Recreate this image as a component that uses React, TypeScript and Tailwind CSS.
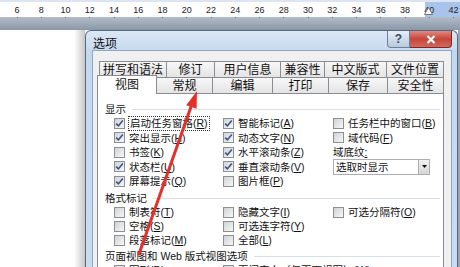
import React from 'react';

const rulerNums = [6, 8, 10, 12, 14, 16, 18, 20, 22, 24, 26, 28, 30, 32, 34, 36, 38, 40, 42];

const tabsTop = [
  { label: '拼写和语法', w: 'w-[68px]' },
  { label: '修订', w: 'w-[48px]' },
  { label: '用户信息', w: 'w-[66px]' },
  { label: '兼容性', w: 'w-[44px]' },
  { label: '中文版式', w: 'w-[62px]' },
  { label: '文件位置', w: 'w-[57px]' },
];

const tabsBottom = [
  { label: '常规', w: 'w-[56px]' },
  { label: '编辑', w: 'w-[60px]' },
  { label: '打印', w: 'w-[56px]' },
  { label: '保存', w: 'w-[59px]' },
  { label: '安全性', w: 'w-[56px]' },
];

function Box({ on }: { on?: boolean }) {
  return (
    <span className="flex h-[11px] w-[11px] shrink-0 items-center justify-center border border-[#8e8f8f] bg-[linear-gradient(135deg,#cfd3d8,#f7f7f7)]">
      {on && (
        <svg width="9" height="9" viewBox="0 0 9 9">
          <path d="M1.2 4.6 L3.4 6.9 L7.8 1.6" fill="none" stroke="#3d5180" strokeWidth="1.6" />
        </svg>
      )}
    </span>
  );
}

function Item({ on, label, k, focus }: { on?: boolean; label: string; k: string; focus?: boolean }) {
  return (
    <div className="flex h-full items-center gap-[4px]">
      <Box on={on} />
      <span className={focus ? 'px-[1px] py-[1px] outline outline-1 outline-dotted outline-[#333]' : ''}>
        {label}(<u>{k}</u>)
      </span>
    </div>
  );
}

function Heading({ text }: { text: string }) {
  return (
    <div className="flex h-[14px] items-center gap-[6px] pl-[7px] pr-[3px]">
      <span className="whitespace-nowrap">{text}</span>
      <div className="h-px flex-1 bg-[#d5dfe5]" />
    </div>
  );
}

export default function App() {
  return (
    <div className="relative h-[267px] w-[460px] overflow-hidden bg-white font-['Liberation_Sans','Noto_Sans_CJK_SC',sans-serif] text-[10.5px] leading-none text-[#111]">
      {/* ruler */}
      <div className="relative h-[17px] border-t-[2px] border-[#dbe5f3] bg-[linear-gradient(to_right,#ffffff_425px,#a9c4ea_425px)]">
        <div className="flex pl-[5px] pt-[3px]">
          {rulerNums.map((n) => (
            <div key={n} className="flex w-[24.26px] shrink-0 flex-col items-center">
              <span className="text-[9px] leading-[10px] text-[#222]">{n}</span>
              <span className="mt-[2px] h-[1px] w-[1px] bg-[#777]" />
            </div>
          ))}
        </div>
        <svg className="absolute left-[424px] top-[5px]" width="9" height="8" viewBox="0 0 9 8">
          <path d="M4.5 0.5 L8.5 7.5 L0.5 7.5 Z" fill="#fff" stroke="#777" strokeWidth="1" />
        </svg>
      </div>
      <div className="h-[13px] bg-[linear-gradient(to_bottom,#b3bcc8,#8b97a8)]" />

      <div className="flex h-[237px]">
        <div className="w-[85px] shrink-0 bg-[linear-gradient(to_right,#ffffff_74px,#c7c7c7_85px)]" />

        {/* dialog */}
        <div className="flex w-[373px] shrink-0 flex-col rounded-t-[6px] border border-b-0 border-[#56667c] bg-[linear-gradient(to_bottom,#dbe7f5,#c4d8ee_22px,#cadcf0)] pl-[6px] pr-[5px]">
          <div className="flex h-[22px] items-start justify-between">
            <span className="mt-[7px] pl-[1px] text-[12px]">选项</span>
            <div className="flex">
              <div className="flex h-[17px] w-[23px] items-center justify-center rounded-bl-[4px] border border-t-0 border-[#6d7f99] bg-[linear-gradient(to_bottom,#e7eef7,#b9c9dd)] text-[12px] font-bold text-[#3b4a60]">
                ?
              </div>
              <div className="flex h-[17px] w-[42px] items-center justify-center rounded-br-[4px] border border-l-0 border-t-0 border-[#7a2a24] bg-[linear-gradient(to_bottom,#e08a80,#c7453a_50%,#d2685c)]">
                <svg width="10" height="9" viewBox="0 0 10 9">
                  <path d="M1.5 1 L8.5 8 M8.5 1 L1.5 8" stroke="#fff" strokeWidth="2.2" />
                </svg>
              </div>
            </div>
          </div>

          {/* client */}
          <div className="flex-1 border border-b-0 border-[#8ea6c2] bg-[#f0f0f0] pl-[4px] pt-[10px]">
            <div className="w-[347px] text-[12px]">
              <div className="flex h-[16px] pl-[2px]">
                {tabsTop.map((t, i) => (
                  <div
                    key={t.label}
                    className={`${t.w} flex items-center justify-center border-t border-r border-[#898c95] bg-[linear-gradient(to_bottom,#f7f7f7,#e4e4e4)] ${i === 0 ? 'border-l' : ''}`}
                  >
                    {t.label}
                  </div>
                ))}
              </div>
              <div className="-mt-[2px] flex h-[18px] items-end">
                <div className="relative z-10 -mb-px flex h-[19px] w-[60px] items-center justify-center border border-b-0 border-[#898c95] bg-white">
                  视图
                </div>
                {tabsBottom.map((t) => (
                  <div
                    key={t.label}
                    className={`${t.w} flex h-[16px] items-center justify-center border-t border-r border-[#898c95] bg-[linear-gradient(to_bottom,#f7f7f7,#e4e4e4)]`}
                  >
                    {t.label}
                  </div>
                ))}
              </div>

              {/* panel */}
              <div className="h-[200px] border border-[#898c95] bg-white pt-[8px] text-[10.5px]">
                <Heading text="显示" />
                <div className="grid grid-cols-[109px_110px_1fr] grid-rows-[repeat(5,14.5px)] pl-[16px]">
                  <Item on label="启动任务窗格" k="R" focus />
                  <Item on label="智能标记" k="A" />
                  <Item label="任务栏中的窗口" k="B" />
                  <Item on label="突出显示" k="H" />
                  <Item on label="动态文字" k="N" />
                  <Item label="域代码" k="F" />
                  <Item label="书签" k="K" />
                  <Item on label="水平滚动条" k="Z" />
                  <div className="flex items-center">
                    域底纹<u>:</u>
                  </div>
                  <Item on label="状态栏" k="U" />
                  <Item on label="垂直滚动条" k="V" />
                  <div className="flex items-center">
                    <div className="flex h-[16px] w-[97px] items-center justify-between border border-[#abadb3] bg-white pl-[2px]">
                      <span>选取时显示</span>
                      <span className="flex h-[14px] w-[11px] items-center justify-center border-l border-[#acacac] bg-[linear-gradient(to_bottom,#f2f2f2,#d6d6d6)]">
                        <svg width="5" height="3" viewBox="0 0 5 3">
                          <path d="M0 0 L5 0 L2.5 3 Z" fill="#111" />
                        </svg>
                      </span>
                    </div>
                  </div>
                  <Item on label="屏幕提示" k="Q" />
                  <Item label="图片框" k="P" />
                  <div />
                </div>

                <div className="mt-[3px]">
                  <Heading text="格式标记" />
                </div>
                <div className="grid grid-cols-[109px_110px_1fr] grid-rows-[repeat(3,14px)] pl-[16px]">
                  <Item label="制表符" k="T" />
                  <Item label="隐藏文字" k="I" />
                  <Item label="可选分隔符" k="O" />
                  <Item label="空格" k="S" />
                  <Item label="可选连字符" k="Y" />
                  <div />
                  <Item label="段落标记" k="M" />
                  <Item label="全部" k="L" />
                  <div />
                </div>

                <div className="mt-[2px]">
                  <Heading text="页面视图和 Web 版式视图选项" />
                </div>
                <div className="grid h-[14px] grid-cols-[109px_1fr] pl-[16px]">
                  <Item on label="图形" k="D" />
                  <Item label="页间空白（仅页面视图）" k="W" />
                </div>
              </div>
            </div>
          </div>
        </div>

        <div className="flex-1 bg-[#9aa5b4]" />
      </div>

      {/* red arrow annotation */}
      <svg className="pointer-events-none absolute left-0 top-0" width="460" height="267" viewBox="0 0 460 267">
        <line x1="139" y1="254" x2="192" y2="104" stroke="#e5302a" strokeWidth="3" strokeLinecap="round" />
        <path d="M197 91 L196.6 108.8 L186.2 105.2 Z" fill="#e5302a" />
      </svg>
    </div>
  );
}
